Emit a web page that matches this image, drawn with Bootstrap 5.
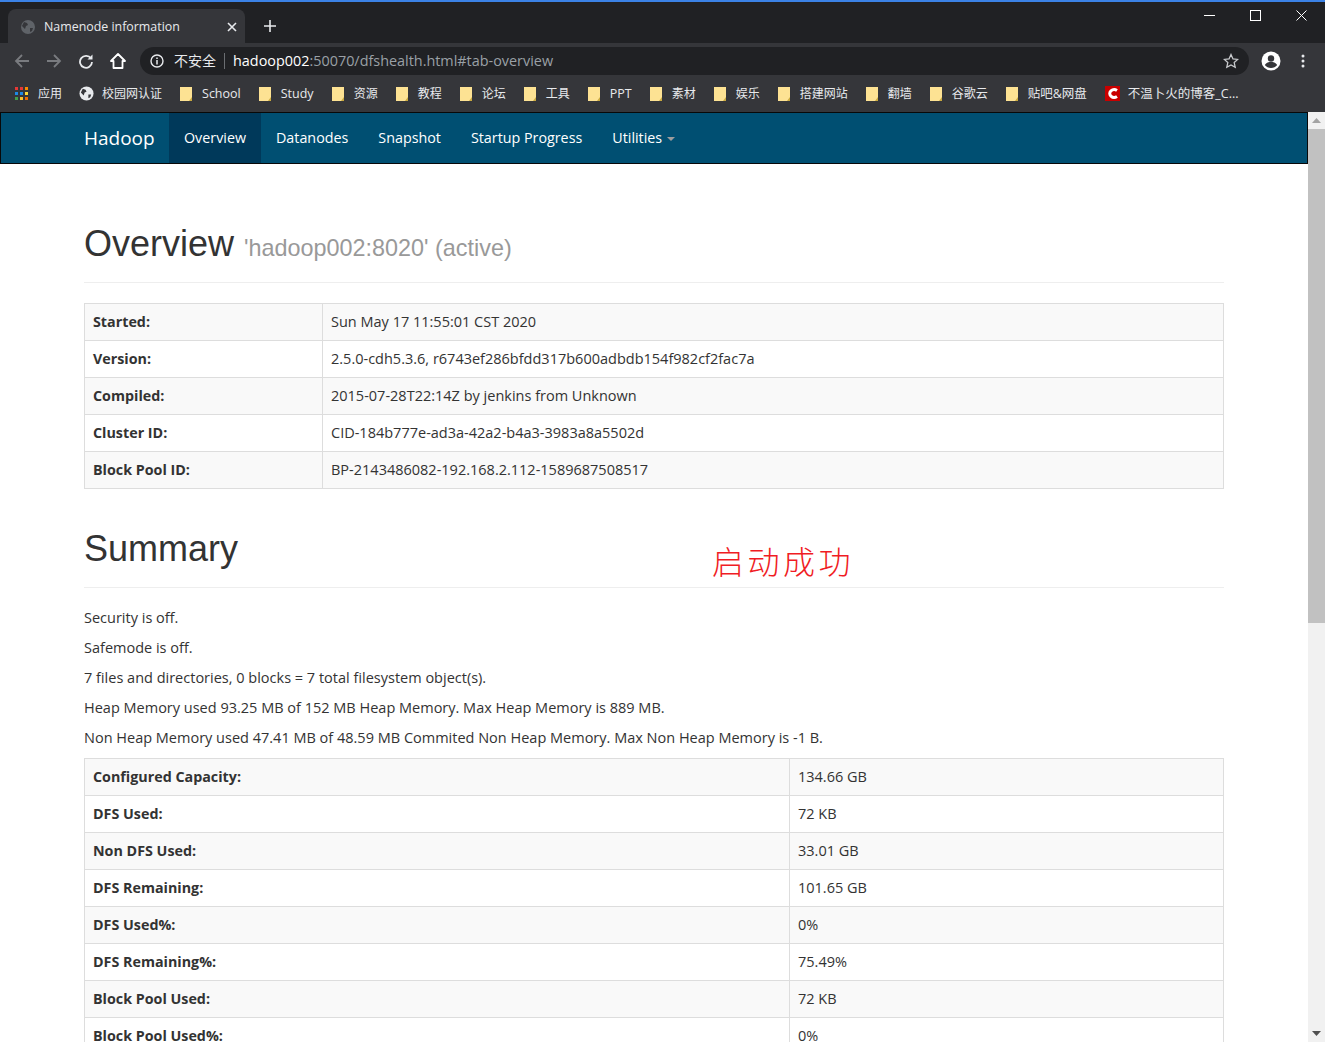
<!DOCTYPE html>
<html lang="en">

<head>
    <meta charset="UTF-8">
    <title>Namenode information</title>
    <link href="https://cdn.jsdelivr.net/npm/bootstrap@5.3.3/dist/css/bootstrap.min.css" rel="stylesheet">
    <style>
        html, body { height: 100%; overflow: hidden; }
        body { background: #fff; color: #333; font-family: "Open Sans", "Noto Sans CJK SC", sans-serif; font-size: 14.5px; line-height: 20px; }
        .browser-frame { height: 1042px; }

        /* browser chrome */
        .chrome-top { height: 112px; background: #35363a; color: #fff; }
        .tab-strip { height: 43px; background: #202124; border-top: 2px solid #3b82e6; padding-left: 8px; }
        .tab-item { width: 237px; height: 34px; margin-top: 7px; background: #35363a; border-radius: 8px 8px 0 0; padding: 1px 8px 0 12px; font-size: 12.4px; }
        .tab-title { margin-left: 8px; color: #e8eaed; }
        .new-tab { margin: 14px 0 0 15px; }
        .win-btns { padding-right: 1px; }
        .win-btn { width: 46px; height: 26px; }
        .tool-row { height: 35px; }
        .tool-btn { width: 32px; height: 32px; flex: none; }
        .url-box { height: 28px; background: #202124; border-radius: 14px; margin: 0 6px; padding: 0 10px 0 10px; font-size: 14.4px; color: #9aa0a6; }
        .url-warn { color: #e8eaed; font-size: 14px; margin: 0 8px 0 10px; }
        .url-sep { width: 1px; height: 16px; background: #6b6e72; margin-right: 8px; }
        .url-host { color: #fff; }
        .back-btn { margin-left: 6px; }
        .menu-btn { margin-right: 6px; }
        .mark-row { height: 34px; padding: 0 0 3px 15px; font-size: 12px; color: #e8eaed; white-space: nowrap; }
        .mark-item { margin-right: 18px; gap: 10px; }
        .mark-item.first-mark { margin-right: 17px; gap: 9px; }
        .mark-item svg { flex: none; }
        .mark-item .tight { margin-right: -2px; }
        .mark-latin { font-size: 12.5px; }

        /* hadoop navbar */
        .hd-nav { height: 52px; background: #004f72; border: 1px solid #080808; padding: 0; }
        .hd-nav-inner { width: 1170px; padding: 0 15px; margin: 0 auto; height: 50px; }
        .hd-brand { font-size: 19px; color: #fff; width: 85px; line-height: 50px; }
        .hd-link { color: #fff; font-size: 14.3px; padding: 0 15px; line-height: 50px; height: 50px; text-decoration: none; }
        .hd-link.current { background: #00395a; }
        .hd-caret { display: inline-block; border-top: 4px solid #9d9d9d; border-left: 4px solid transparent; border-right: 4px solid transparent; margin-left: 1px; vertical-align: middle; }

        /* page body */
        .page-scroll { height: 930px; }
        .page-area { overflow: hidden; position: relative; }
        .page-wrap { width: 1170px; padding: 20px 15px 0; margin: 0 auto; }
        .page-head { margin: 40px 0 20px; padding-bottom: 9px; border-bottom: 1px solid #eee; }
        .page-head.tail-head { padding-bottom: 8px; }
        .page-head h1 { font-family: "Liberation Sans", sans-serif; font-size: 36px; line-height: 40px; font-weight: 500; color: #333; margin: 20px 0 10px; }
        .page-head h1.top-title { margin-bottom: 9px; }
        .page-head small { font-size: 23.4px; color: #999; font-weight: 400; line-height: 1; }
        .page-wrap p { margin: 0 0 10px; }
        .info-table { --bs-table-striped-bg: #f9f9f9; --bs-table-accent-bg: transparent; --bs-table-color: #333; --bs-table-striped-color: #333; border-color: #ddd; margin-bottom: 20px; }
        .info-table th, .info-table td { padding: 8px; line-height: 20px; font-size: 14.5px; border-color: #ddd; }
        .info-table th { font-weight: 700; font-size: 14.3px; }
        .w-first { width: 238px; }
        .w-second { width: 705px; }
        .start-note { position: absolute; left: 712px; top: 428px; font-family: "Noto Sans CJK SC", sans-serif; font-weight: 300; font-size: 32px; line-height: 40px; letter-spacing: 3.5px; color: #f01c24; }

        /* scrollbar */
        .fake-scroll { width: 17px; background: #f1f1f1; }
        .scroll-btn { height: 17px; }
        .scroll-thumb { height: 494px; background: #c1c1c1; }
    </style>
</head>

<body>
    <div class="browser-frame d-flex flex-column">
        <div class="chrome-top flex-shrink-0">
            <div class="tab-strip d-flex align-items-start">
                <div class="tab-item d-flex align-items-center">
                    <svg width="16" height="16" viewBox="0 0 16 16"><circle cx="8" cy="8" r="7" fill="#5f6368"/><path d="M4 3l3 1 1 2-2 1-1 3-3-3zM10 9l3 0-1 3-2 1z" fill="#35363a"/></svg>
                    <span class="tab-title flex-grow-1">Namenode information</span>
                    <svg width="10" height="10" viewBox="0 0 10 10"><path d="M1 1l8 8M9 1l-8 8" stroke="#e8eaed" stroke-width="1.6"/></svg>
                </div>
                <svg class="new-tab" width="20" height="20" viewBox="0 0 20 20"><path d="M10 4v12M4 10h12" stroke="#e8eaed" stroke-width="1.6"/></svg>
                <div class="win-btns d-flex ms-auto">
                    <div class="win-btn d-flex align-items-center justify-content-center"><svg width="11" height="11" viewBox="0 0 11 11"><path d="M0 5.5h11" stroke="#fff"/></svg></div>
                    <div class="win-btn d-flex align-items-center justify-content-center"><svg width="11" height="11" viewBox="0 0 11 11"><rect x=".5" y=".5" width="10" height="10" fill="none" stroke="#fff"/></svg></div>
                    <div class="win-btn d-flex align-items-center justify-content-center"><svg width="11" height="11" viewBox="0 0 11 11"><path d="M.5.5l10 10M10.500.5l-10 10" stroke="#fff"/></svg></div>
                </div>
            </div>
            <div class="tool-row d-flex align-items-center">
                <div class="tool-btn back-btn d-flex align-items-center justify-content-center"><svg width="16" height="16" viewBox="0 0 16 16"><path d="M15 8H2M8 2L2 8l6 6" fill="none" stroke="#797b7f" stroke-width="1.8"/></svg></div>
                <div class="tool-btn d-flex align-items-center justify-content-center"><svg width="16" height="16" viewBox="0 0 16 16"><path d="M1 8h13M8 2l6 6-6 6" fill="none" stroke="#797b7f" stroke-width="1.8"/></svg></div>
                <div class="tool-btn d-flex align-items-center justify-content-center"><svg width="16" height="16" viewBox="0 0 16 16"><path d="M13 5.500A6 6 0 1 0 14 9" fill="none" stroke="#e8eaed" stroke-width="1.8"/><path d="M14.500 1.500v5h-5z" fill="#e8eaed"/></svg></div>
                <div class="tool-btn d-flex align-items-center justify-content-center"><svg width="18" height="18" viewBox="0 0 18 18"><path d="M9 2L2 9h2.500v7h9V9H16z" fill="none" stroke="#fff" stroke-width="1.8" stroke-linejoin="round"/></svg></div>
                <div class="url-box d-flex align-items-center flex-grow-1">
                    <svg width="14" height="14" viewBox="0 0 14 14"><circle cx="7" cy="7" r="6" fill="none" stroke="#e8eaed" stroke-width="1.4"/><path d="M7 6v4.500M7 3.500v1.500" stroke="#e8eaed" stroke-width="1.5"/></svg>
                    <span class="url-warn">不安全</span><span class="url-sep"></span>
                    <span><span class="url-host">hadoop002</span>:50070/dfshealth.html#tab-overview</span>
                    <svg class="ms-auto" width="16" height="16" viewBox="0 0 16 16"><path d="M8 1.500l2 4.400 4.700.5-3.500 3.200 1 4.700L8 11.900l-4.200 2.400 1-4.700L1.300 6.400 6 5.900z" fill="none" stroke="#c8cacd" stroke-width="1.3"/></svg>
                </div>
                <div class="tool-btn d-flex align-items-center justify-content-center"><svg width="20" height="20" viewBox="0 0 20 20"><circle cx="10" cy="10" r="9.500" fill="#fff"/><circle cx="10" cy="7.500" r="3.200" fill="#35363a"/><path d="M3.800 14c1.500-2.500 4-3 6.200-3s4.700.5 6.200 3c-1.500 2-3.700 3-6.200 3s-4.700-1-6.200-3z" fill="#35363a"/></svg></div>
                <div class="tool-btn menu-btn d-flex align-items-center justify-content-center"><svg width="4" height="14" viewBox="0 0 4 14"><circle cx="2" cy="2" r="1.500" fill="#e8eaed"/><circle cx="2" cy="7" r="1.500" fill="#e8eaed"/><circle cx="2" cy="12" r="1.500" fill="#e8eaed"/></svg></div>
            </div>
            <div id="marks" class="mark-row d-flex align-items-center"></div>
        </div>

        <div class="page-scroll d-flex flex-grow-1">
            <div class="page-area flex-grow-1">
                <nav class="hd-nav">
                    <div class="hd-nav-inner d-flex align-items-center">
                        <a class="hd-brand text-decoration-none" href="#">Hadoop</a>
                        <a class="hd-link current" href="#">Overview</a>
                        <a class="hd-link" href="#">Datanodes</a>
                        <a class="hd-link" href="#">Snapshot</a>
                        <a class="hd-link" href="#">Startup Progress</a>
                        <a class="hd-link" href="#">Utilities <span class="hd-caret"></span></a>
                    </div>
                </nav>
                <div class="page-wrap">
                    <div class="page-head">
                        <h1 class="top-title">Overview <small>'hadoop002:8020' (active)</small></h1>
                    </div>
                    <table class="table table-bordered table-striped info-table">
                        <tbody>
                            <tr><th class="w-first">Started:</th><td>Sun May 17 11:55:01 CST 2020</td></tr>
                            <tr><th>Version:</th><td>2.5.0-cdh5.3.6, r6743ef286bfdd317b600adbdb154f982cf2fac7a</td></tr>
                            <tr><th>Compiled:</th><td>2015-07-28T22:14Z by jenkins from Unknown</td></tr>
                            <tr><th>Cluster ID:</th><td>CID-184b777e-ad3a-42a2-b4a3-3983a8a5502d</td></tr>
                            <tr><th>Block Pool ID:</th><td>BP-2143486082-192.168.2.112-1589687508517</td></tr>
                        </tbody>
                    </table>
                    <div class="page-head tail-head">
                        <h1>Summary</h1>
                    </div>
                    <p>Security is off.</p>
                    <p>Safemode is off.</p>
                    <p>7 files and directories, 0 blocks = 7 total filesystem object(s).</p>
                    <p>Heap Memory used 93.25 MB of 152 MB Heap Memory. Max Heap Memory is 889 MB.</p>
                    <p>Non Heap Memory used 47.41 MB of 48.59 MB Commited Non Heap Memory. Max Non Heap Memory is -1 B.</p>
                    <table class="table table-bordered table-striped info-table">
                        <tbody>
                            <tr><th class="w-second">Configured Capacity:</th><td>134.66 GB</td></tr>
                            <tr><th>DFS Used:</th><td>72 KB</td></tr>
                            <tr><th>Non DFS Used:</th><td>33.01 GB</td></tr>
                            <tr><th>DFS Remaining:</th><td>101.65 GB</td></tr>
                            <tr><th>DFS Used%:</th><td>0%</td></tr>
                            <tr><th>DFS Remaining%:</th><td>75.49%</td></tr>
                            <tr><th>Block Pool Used:</th><td>72 KB</td></tr>
                            <tr><th>Block Pool Used%:</th><td>0%</td></tr>
                        </tbody>
                    </table>
                </div>
                <div class="start-note">启动成功</div>
            </div>
            <div class="fake-scroll flex-shrink-0 d-flex flex-column">
                <div class="scroll-btn d-flex align-items-center justify-content-center"><svg width="9" height="5" viewBox="0 0 9 5"><path d="M4.500 0L9 5H0z" fill="#a3a3a3"/></svg></div>
                <div class="scroll-thumb"></div>
                <div class="scroll-btn d-flex align-items-center justify-content-center mt-auto"><svg width="9" height="5" viewBox="0 0 9 5"><path d="M4.500 5L9 0H0z" fill="#505050"/></svg></div>
            </div>
        </div>
    </div>

    <script>
        // bookmarks bar
        const folder = '<svg width="12" height="14" viewBox="0 0 12 14"><path d="M0 0h12v14H0z" fill="#fde293"/><path d="M12 10l-3 4h3z" fill="#c9a93f"/></svg>';
        const apps = '<svg width="14" height="14" viewBox="0 0 14 14"><g fill="#e53935"><rect width="3" height="3"/><rect x="5" width="3" height="3"/></g><rect x="10" width="3" height="3" fill="#fb8c00"/><g fill="#1e88e5"><rect y="5" width="3" height="3"/><rect x="5" y="5" width="3" height="3"/></g><rect x="10" y="5" width="3" height="3" fill="#fdd835"/><rect y="10" width="3" height="3" fill="#43a047"/><rect x="5" y="10" width="3" height="3" fill="#fbc02d"/><rect x="10" y="10" width="3" height="3" fill="#ef6c00"/></svg>';
        const globe = '<svg class="tight" width="15" height="15" viewBox="0 0 16 16"><circle cx="8" cy="8" r="7.500" fill="#e8eaed"/><path d="M4 3l3 1 1 2-2 1-1 3-3-3zM10 9l3 0-1 3-2 1z" fill="#35363a"/></svg>';
        const csdn = '<svg class="tight" width="15" height="15" viewBox="0 0 15 15"><rect width="15" height="15" fill="#c90000"/><path d="M12 4.500A4.500 3.800 0 1 0 12 10.500" fill="none" stroke="#fff" stroke-width="3"/></svg>';
        const items = [
            [apps, '应用', 'first'], [globe, '校园网认证'], [folder, 'School', 'mark-latin'], [folder, 'Study', 'mark-latin'], [folder, '资源'],
            [folder, '教程'], [folder, '论坛'], [folder, '工具'], [folder, 'PPT', 'mark-latin'], [folder, '素材'], [folder, '娱乐'],
            [folder, '搭建网站'], [folder, '翻墙'], [folder, '谷歌云'], [folder, '贴吧&网盘', 'mark-latin'], [csdn, '不温卜火的博客_C...', 'mark-latin']
        ];
        document.getElementById('marks').innerHTML = items.map(i =>
            `<div class="mark-item d-flex align-items-center ${i[2] === 'first' ? 'first-mark' : ''}">${i[0]}<span class="${i[2] === 'mark-latin' ? 'mark-latin' : ''}">${i[1]}</span></div>`).join('');
    </script>
    <script src="https://cdn.jsdelivr.net/npm/bootstrap@5.3.3/dist/js/bootstrap.bundle.min.js"></script>
</body>

</html>
